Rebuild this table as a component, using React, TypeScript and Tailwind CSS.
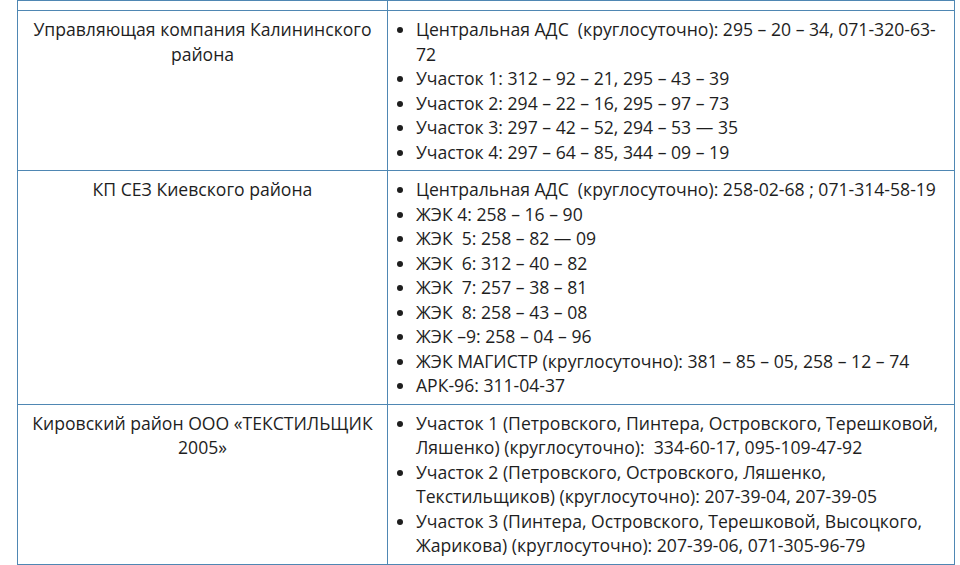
import React from 'react'

type Row = { name: string; items: string[] }

const rows: Row[] = [
  {
    name: 'Управляющая компания Калининского района',
    items: [
      'Центральная АДС \u00a0(круглосуточно): 295 – 20 – 34, 071-320-63-72',
      'Участок 1: 312 – 92 – 21, 295 – 43 – 39',
      'Участок 2: 294 – 22 – 16, 295 – 97 – 73',
      'Участок 3: 297 – 42 – 52, 294 – 53 — 35',
      'Участок 4: 297 – 64 – 85, 344 – 09 – 19',
    ],
  },
  {
    name: 'КП СЕЗ Киевского района',
    items: [
      'Центральная АДС \u00a0(круглосуточно): 258-02-68 ; 071-314-58-19',
      'ЖЭК 4: 258 – 16 – 90',
      'ЖЭК \u00a05: 258 – 82 — 09',
      'ЖЭК \u00a06: 312 – 40 – 82',
      'ЖЭК \u00a07: 257 – 38 – 81',
      'ЖЭК \u00a08: 258 – 43 – 08',
      'ЖЭК –9: 258 – 04 – 96',
      'ЖЭК МАГИСТР (круглосуточно): 381 – 85 – 05, 258 – 12 – 74',
      'АРК-96: 311-04-37',
    ],
  },
  {
    name: 'Кировский район ООО «ТЕКСТИЛЬЩИК 2005»',
    items: [
      'Участок 1 (Петровского, Пинтера, Островского, Терешковой, Ляшенко) (круглосуточно): \u00a0334-60-17, 095-109-47-92',
      'Участок 2 (Петровского, Островского, Ляшенко, Текстильщиков) (круглосуточно): 207-39-04, 207-39-05',
      'Участок 3 (Пинтера, Островского, Терешковой, Высоцкого, Жарикова) (круглосуточно): 207-39-06, 071-305-96-79',
    ],
  },
]

export default function App() {
  return (
    <div className="w-[960px] h-[565px] overflow-hidden bg-white pl-[17px] font-['Open_Sans',sans-serif] text-[17.6px] leading-[24.5px] text-[#1e1e1e]">
      <table className="w-[938px] border-collapse table-fixed">
        <colgroup>
          <col className="w-[370px]" />
          <col />
        </colgroup>
        <tbody>
          <tr className="h-[10px]">
            <td className="border border-[#4f87b3] p-0" />
            <td className="border border-[#4f87b3] p-0" />
          </tr>
          {rows.map((r, i) => (
            <tr key={i}>
              <td className="border border-[#4f87b3] align-top text-center px-[10px] py-[6px]">
                {r.name}
              </td>
              <td className="border border-[#4f87b3] align-top pl-[4px] pr-[12px] py-[6px]">
                <ul className="list-disc pl-[24px]">
                  {r.items.map((it, j) => (
                    <li key={j}>{it}</li>
                  ))}
                </ul>
              </td>
            </tr>
          ))}
        </tbody>
      </table>
    </div>
  )
}
